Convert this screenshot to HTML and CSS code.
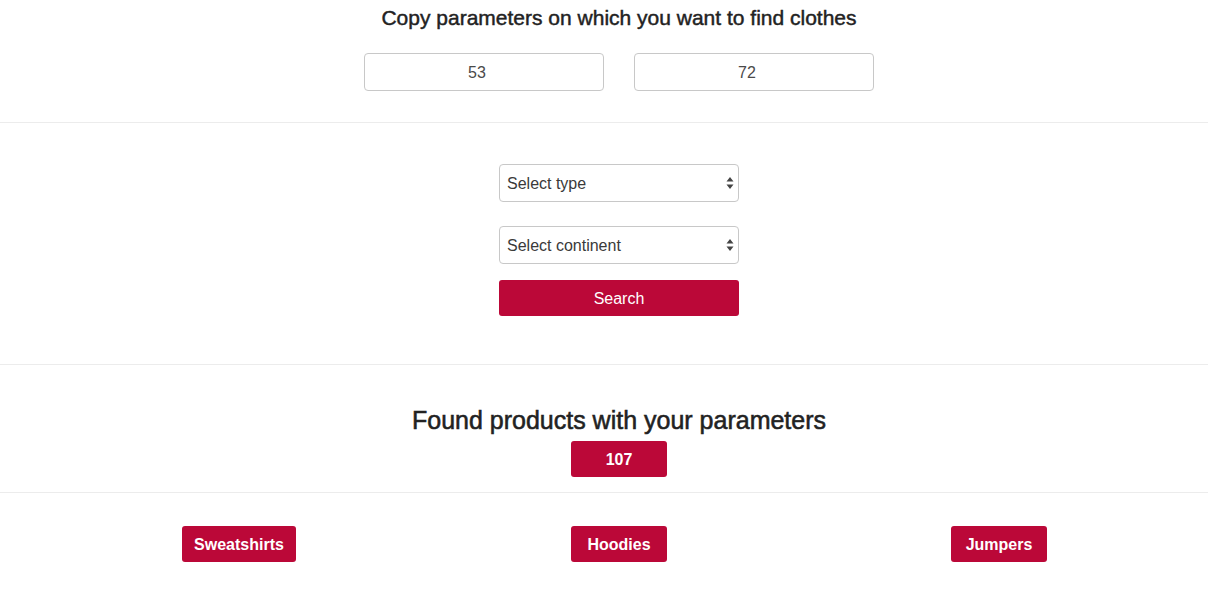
FILE: index.html
```html
<!DOCTYPE html>
<html>
<head>
<meta charset="utf-8">
<link rel="stylesheet" href="styles.css">
</head>
<body>
<div class="page">
  <section class="params">
    <h1 class="title">Copy parameters on which you want to find clothes</h1>
    <div class="inputs">
      <input class="field" type="text" value="53">
      <input class="field" type="text" value="72">
    </div>
  </section>
  <hr class="rule">
  <section class="filters">
    <div class="select-wrap">
      <select class="select"><option>Select type</option></select>
      <svg class="arrows" width="8" height="14" viewBox="0 0 8 14"><path d="M4 1 L7.5 5.5 H0.5 Z M4 13 L7.5 8.5 H0.5 Z" fill="#444"/></svg>
    </div>
    <div class="select-wrap">
      <select class="select"><option>Select continent</option></select>
      <svg class="arrows" width="8" height="14" viewBox="0 0 8 14"><path d="M4 1 L7.5 5.5 H0.5 Z M4 13 L7.5 8.5 H0.5 Z" fill="#444"/></svg>
    </div>
    <button class="search">Search</button>
  </section>
  <hr class="rule">
  <section class="found">
    <h2 class="found-title">Found products with your parameters</h2>
    <span class="badge">107</span>
  </section>
  <hr class="rule">
  <section class="cats">
    <div class="cat"><a class="badge">Sweatshirts</a></div>
    <div class="cat"><a class="badge">Hoodies</a></div>
    <div class="cat"><a class="badge">Jumpers</a></div>
  </section>
</div>
</body>
</html>
```
FILE: styles.css
```css
* { box-sizing: border-box; }
html, body { margin: 0; padding: 0; background: #fff; }
body {
  font-family: "Liberation Sans", Arial, Helvetica, sans-serif;
  color: #222;
  width: 1208px;
  overflow: hidden;
}
.params, .filters, .found, .cats {
  padding-left: 30px;
}
.params {
  padding-top: 6px;
  padding-bottom: 31px;
  display: flex;
  flex-direction: column;
  align-items: center;
}
.title {
  margin: 0;
  font-size: 21px;
  line-height: 24px;
  font-weight: 400;
  color: #222;
  -webkit-text-stroke: 0.45px #222;
}
.inputs {
  margin-top: 23px;
  display: flex;
  gap: 30px;
}
.field {
  width: 240px;
  height: 38px;
  border: 1px solid #c8c8c8;
  border-radius: 4px;
  text-align: center;
  font-family: inherit;
  font-size: 16px;
  color: #4a4a4a;
  padding: 2px 14px 0 0;
  outline: none;
}
.rule {
  margin: 0;
  border: 0;
  height: 1px;
  background: #ececec;
}
.filters {
  padding-top: 41px;
  padding-bottom: 48px;
  display: flex;
  flex-direction: column;
  align-items: center;
}
.select-wrap {
  position: relative;
  width: 240px;
  height: 38px;
  margin-bottom: 24px;
}
.select-wrap + .select-wrap { margin-bottom: 16px; }
.select {
  -webkit-appearance: none;
  appearance: none;
  width: 100%;
  height: 100%;
  border: 1px solid #c8c8c8;
  border-radius: 4px;
  background: #fff;
  font-family: inherit;
  font-size: 16px;
  color: #3a3a3a;
  padding: 0 7px;
  outline: none;
}
.arrows {
  position: absolute;
  right: 5px;
  top: 12px;
  pointer-events: none;
}
.search {
  width: 240px;
  height: 36px;
  border: 0;
  border-radius: 3px;
  background: #bb0838;
  color: #fff;
  font-family: inherit;
  font-size: 16px;
  padding: 2px 0 0;
}
.found {
  padding-top: 41px;
  padding-bottom: 15px;
  display: flex;
  flex-direction: column;
  align-items: center;
}
.found-title {
  margin: 0 0 7px;
  font-size: 25px;
  line-height: 28px;
  font-weight: 400;
  color: #222;
  -webkit-text-stroke: 0.55px #222;
}
.badge {
  display: inline-flex;
  align-items: center;
  justify-content: center;
  min-width: 96px;
  height: 36px;
  padding: 2px 12px 0;
  background: #bb0838;
  color: #fff;
  border-radius: 3px;
  font-size: 16px;
  font-weight: 700;
  text-decoration: none;
}
.cats {
  padding-top: 33px;
  display: grid;
  grid-template-columns: repeat(3, 380px);
  justify-content: center;
}
.cat {
  display: flex;
  justify-content: center;
}
```
